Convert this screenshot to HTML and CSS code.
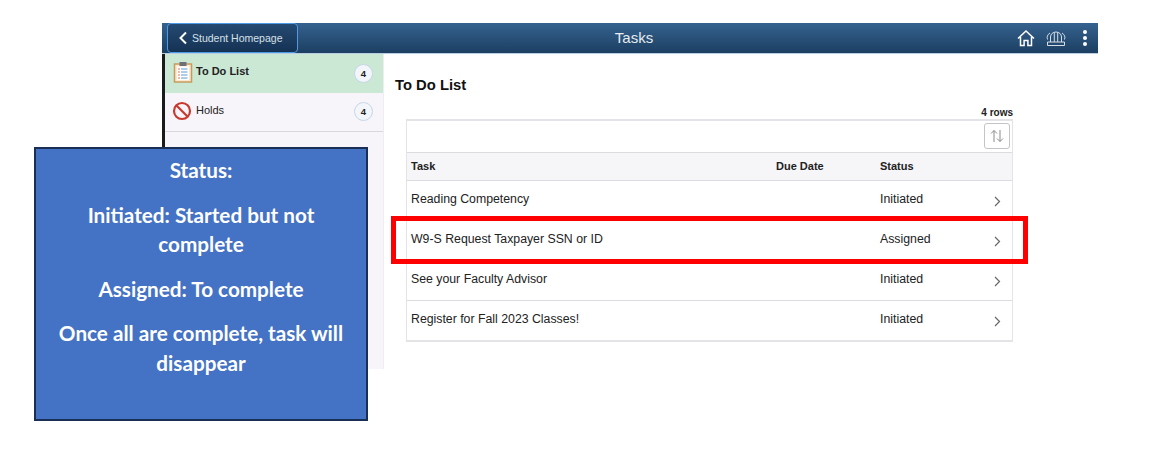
FILE: index.html
```html
<!DOCTYPE html>
<html lang="en">
<head>
  <meta charset="UTF-8" />
  <title>Tasks</title>
  <link rel="stylesheet" href="styles.css">
</head>
<body>
  <div class="shot">
    <header class="topbar">
      <a class="back" href="#">
        <svg class="back-icon" width="10" height="14" viewBox="0 0 10 14"><path d="M8 1.500 2.500 7 8 12.500" fill="none" stroke="#fff" stroke-width="2"/></svg>
        Student Homepage
      </a>
      <div class="title">Tasks</div>
      <div class="actions">
        <svg class="home" width="18" height="18" viewBox="0 0 18 18"><path d="M1 9.500 9 2l8 7.500M3.500 8v8.500h3.600v-5h3.800v5h3.600V8" fill="none" stroke="#fff" stroke-width="1.500"/></svg>
        <svg class="helmet" width="20" height="18" viewBox="0 0 20 18"><g fill="none" stroke="#d5dde6" stroke-width="1"><path d="M1.500 16.500h17v-3.500h-17zM4.500 13V8C4.500 5 7 3 10 3s5.500 2 5.500 5v5M8.300 13V3.500M11.700 13V3.500M1.500 10.500c-1-2.500 0-5 2.500-6.500M18.500 10.500c1-2.500 0-5-2.500-6.500"/></g></svg>
        <svg class="dots" width="6" height="18" viewBox="0 0 6 18"><g fill="#fff"><circle cx="3" cy="3" r="2"/><circle cx="3" cy="9" r="2"/><circle cx="3" cy="15" r="2"/></g></svg>
      </div>
    </header>
    <div class="body">
      <aside class="side">
        <div class="side-item active">
          <svg width="20" height="22" viewBox="0 0 20 22"><rect x="1.500" y="3" width="17" height="18" fill="#fbe9cf" stroke="#c79a5e" stroke-width="1.500"/><rect x="4" y="5.500" width="12" height="13.500" fill="#fff"/><rect x="6.500" y="1" width="7" height="4" fill="#6d7074"/><path d="M8 8h6.500M8 11h6.500M8 14h6.500M8 17h6.500" stroke="#5b9bd5"/><path d="M5 8h2M5 11h2M5 14h2M5 17h2" stroke="#e0705c"/></svg>
          <span class="side-label">To Do List</span>
          <span class="badge">4</span>
        </div>
        <div class="side-item holds">
          <svg class="stop" width="20" height="20" viewBox="0 0 20 20"><circle cx="10" cy="10" r="8" fill="none" stroke="#c8392f" stroke-width="2.200"/><path d="M4.500 4.500 15.500 15.500" stroke="#c8392f" stroke-width="2.200"/></svg>
          <span class="side-label">Holds</span>
          <span class="badge">4</span>
        </div>
      </aside>
      <main class="content">
        <h1>To Do List</h1>
        <div class="rowcount">4 rows</div>
        <div class="grid">
          <div class="toolbar">
            <button class="sort">
              <svg width="14" height="14" viewBox="0 0 14 14"><path d="M4 13V1.500M1 4.500l3-3 3 3M10 1v11.500M7 9.500l3 3 3-3" fill="none" stroke="#8a8a8a" stroke-width="1"/></svg>
            </button>
          </div>
          <div class="row head"><span>Task</span><span>Due Date</span><span>Status</span></div>
          <div class="row"><span>Reading Competency</span><span></span><span>Initiated</span><svg class="chev" width="7" height="11" viewBox="0 0 7 11"><path d="M1 1l4.500 4.500L1 10" fill="none" stroke="#666" stroke-width="1.200"/></svg></div>
          <div class="row"><span>W9-S Request Taxpayer SSN or ID</span><span></span><span>Assigned</span><svg class="chev" width="7" height="11" viewBox="0 0 7 11"><path d="M1 1l4.500 4.500L1 10" fill="none" stroke="#666" stroke-width="1.200"/></svg></div>
          <div class="row"><span>See your Faculty Advisor</span><span></span><span>Initiated</span><svg class="chev" width="7" height="11" viewBox="0 0 7 11"><path d="M1 1l4.500 4.500L1 10" fill="none" stroke="#666" stroke-width="1.200"/></svg></div>
          <div class="row"><span>Register for Fall 2023 Classes!</span><span></span><span>Initiated</span><svg class="chev" width="7" height="11" viewBox="0 0 7 11"><path d="M1 1l4.500 4.500L1 10" fill="none" stroke="#666" stroke-width="1.200"/></svg></div>
        </div>
      </main>
    </div>
  </div>
  <div class="highlight"></div>
  <div class="callout">
    <p>Status:</p>
    <p>Initiated: Started but not complete</p>
    <p>Assigned: To complete</p>
    <p>Once all are complete, task will disappear</p>
  </div>
</body>
</html>
```
FILE: styles.css
```css
body {
  margin: 0;
  height: 463px;
  overflow: hidden;
  background-color: #fff;
  font-family: "Liberation Sans", Arial, sans-serif;
  color: #222;
}
.shot {
  width: 936px;
  margin: 23px 0 0 162px;
}
.topbar {
  display: flex;
  align-items: center;
  height: 30px;
  background: linear-gradient(#35628f, #1c3f62);
  border-bottom: 1px solid #b9cde2;
  position: relative;
}
.back {
  display: flex;
  align-items: center;
  gap: 4px;
  box-sizing: border-box;
  width: 131px;
  height: 30px;
  margin-left: 5px;
  padding-left: 10px;
  background: linear-gradient(#264a72, #143254);
  border: 1px solid #4d9be6;
  border-radius: 4px;
  color: #d8e0e8;
  font-size: 10.500px;
  text-decoration: none;
}
.title {
  position: absolute;
  left: 0;
  right: 0;
  margin: -2px 0 0 8px;
  text-align: center;
  color: #e6ebf0;
  font-size: 15px;
}
.actions {
  display: flex;
  align-items: center;
  margin-left: auto;
  margin-right: 10px;
}
.helmet {
  margin: 0 16px 0 11px;
}
.body {
  display: flex;
  height: 315px;
  border-left: 3px solid #1a1a1a;
}
.side {
  width: 218px;
  background-color: #f7f5f9;
  border-right: 1px solid #eeeef0;
}
.side-item {
  display: flex;
  align-items: center;
  gap: 3px;
  box-sizing: border-box;
  height: 39px;
  padding: 0 10px 3px 8px;
  font-size: 11px;
}
.side-item.active {
  background-color: #cbe8d5;
  font-weight: bold;
}
.side-item.holds {
  gap: 4px;
  padding-left: 7px;
  border-bottom: 1px solid #d8d8dc;
}
.side-label {
  margin-bottom: 3px;
}
.holds .side-label {
  margin-bottom: 1px;
}
.stop {
  margin-top: 1px;
}
.badge {
  margin: 2px 0 0 auto;
  display: flex;
  align-items: center;
  justify-content: center;
  width: 17px;
  height: 17px;
  border: 1px solid #c5d6e8;
  border-radius: 50%;
  background-color: #f2f6fb;
  font-size: 9.500px;
  font-weight: bold;
}
.content {
  flex: 1;
  padding: 22px 0 0 11px;
}
h1 {
  margin: 0;
  font-size: 14.800px;
  line-height: 18px;
  color: #111;
}
.rowcount {
  width: 618px;
  margin-top: 13px;
  text-align: right;
  font-size: 10px;
  font-weight: bold;
  line-height: 12px;
}
.grid {
  width: 607px;
  margin-left: 11px;
  border: 1px solid #e4e4e8;
  border-width: 2px 1px;
  box-sizing: border-box;
}
.toolbar {
  display: flex;
  justify-content: flex-end;
  height: 31px;
  padding: 2px 2px 0 0;
  box-sizing: border-box;
}
.sort {
  display: flex;
  align-items: center;
  justify-content: center;
  width: 26px;
  height: 26px;
  padding: 0;
  background-color: #fff;
  border: 1px solid #c4c4c8;
  border-radius: 3px;
}
.row {
  display: grid;
  grid-template-columns: 365px 104px 1fr 14px;
  align-items: center;
  height: 40px;
  box-sizing: border-box;
  padding: 0 11px 3px 4px;
  border-top: 1px solid #dcdce0;
  font-size: 12.300px;
}
.row.head {
  height: 28px;
  padding-bottom: 2px;
  background-color: #f6f5f8;
  font-size: 11px;
  font-weight: bold;
}
.chev {
  margin-top: 5px;
  justify-self: end;
}
.highlight {
  position: absolute;
  left: 391px;
  top: 216px;
  width: 627px;
  height: 38px;
  border: 5px solid #f00;
}
.callout {
  position: absolute;
  left: 34px;
  top: 147px;
  box-sizing: border-box;
  width: 334px;
  height: 274px;
  padding: 7px 20px 0;
  background-color: #4472c4;
  border: 2px solid #1a2f56;
  color: #fff;
  font-family: Lato, "Open Sans", sans-serif;
  font-size: 20.700px;
  font-weight: bold;
  line-height: 29.500px;
  text-align: center;
}
.callout p {
  margin: 0 0 15px;
}
```
